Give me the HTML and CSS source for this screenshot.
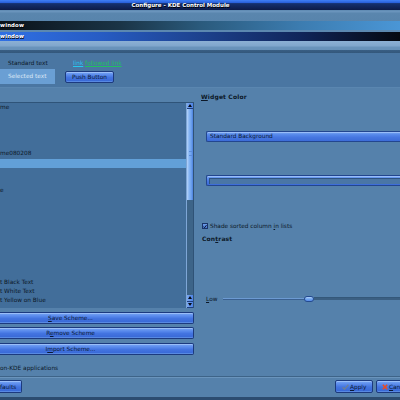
FILE: index.html
```html
<!DOCTYPE html>
<html>
<head>
<meta charset="utf-8">
<link rel="stylesheet" href="styles.css">
</head>
<body>
<div class="screen">
  <div class="titlebar">Configure - KDE Control Module</div>
  <div class="band1"></div>
  <div class="wt inactive">window</div>
  <div class="wgap"></div>
  <div class="wt active">window</div>
  <div class="band2"></div>
  <div class="darkline"></div>
  <div class="preview">
    <div class="std">Standard text</div>
    <div class="links"><span class="link">link</span> <span class="visited">followed link</span></div>
    <div class="seltext">Selected text</div>
    <div class="pushcell"><div class="btn push">Push Button</div></div>
  </div>
  <div class="main">
    <div class="left">
      <div class="list">
        <div class="items">
          <div class="row">me</div>
          <div class="row"></div>
          <div class="row"></div>
          <div class="row"></div>
          <div class="row"></div>
          <div class="row">me080208</div>
          <div class="row sel"></div>
          <div class="row"></div>
          <div class="row"></div>
          <div class="row">e</div>
          <div class="row"></div>
          <div class="row"></div>
          <div class="row"></div>
          <div class="row"></div>
          <div class="row"></div>
          <div class="row"></div>
          <div class="row"></div>
          <div class="row"></div>
          <div class="row"></div>
          <div class="row">t Black Text</div>
          <div class="row">t White Text</div>
          <div class="row">t Yellow on Blue</div>
        </div>
        <div class="scroll">
          <div class="sb-btn"><svg width="4" height="3" viewBox="0 0 4 3"><path d="M0 3 L2 0 L4 3 Z" fill="#050a14"/></svg></div>
          <div class="sb-thumb"><div class="grip"></div></div>
          <div class="sb-trough"></div>
          <div class="sb-btn"><svg width="4" height="3" viewBox="0 0 4 3"><path d="M0 3 L2 0 L4 3 Z" fill="#050a14"/></svg></div>
          <div class="sb-btn"><svg width="4" height="3" viewBox="0 0 4 3"><path d="M0 0 L4 0 L2 3 Z" fill="#050a14"/></svg></div>
        </div>
      </div>
      <div class="btn wide first"><span><u>S</u>ave Scheme...</span></div>
      <div class="btn wide second"><span>R<u>e</u>move Scheme</span></div>
      <div class="btn wide third"><span>I<u>m</u>port Scheme...</span></div>
    </div>
    <div class="right">
      <div class="heading"><u>W</u>idget Color</div>
      <div class="combo">Standard Background</div>
      <div class="combo colorbtn"><div class="swatch"></div></div>
      <div class="check">
        <span class="cb"><svg width="5" height="5" viewBox="0 0 5 5"><path d="M0.6 2.6 L1.9 4 L4.4 0.8" fill="none" stroke="#06101e" stroke-width="1.1"/></svg></span>
        <span>Shade sorted column <u>i</u>n lists</span>
      </div>
      <div class="heading contrast">Con<u>t</u>rast</div>
      <div class="slider">
        <span class="low"><u>L</u>ow</span>
        <div class="track">
          <div class="groove-left"></div>
          <div class="handle"></div>
          <div class="groove-right"></div>
        </div>
      </div>
    </div>
  </div>
  <div class="nonkde">on-KDE applications</div>
  <div class="sep"></div>
  <div class="footer">
    <div class="btn defaults">faults</div>
    <div class="btn apply">
      <svg width="7" height="6" viewBox="0 0 7 6"><path d="M0.6 3.2 L2.5 5.2 L6.4 0.8" fill="none" stroke="#6e7f94" stroke-width="1.3"/></svg>
      <span><u>A</u>pply</span>
    </div>
    <div class="btn cancel">
      <svg width="6" height="6" viewBox="0 0 6 6"><path d="M0.8 0.8 L5.2 5.2 M5.2 0.8 L0.8 5.2" stroke="#f04a1c" stroke-width="1.5"/></svg>
      <span><u>C</u>ancel</span>
    </div>
  </div>
  <div class="bottom"></div>
</div>
</body>
</html>
```

FILE: styles.css
```css
* { box-sizing: border-box; margin: 0; padding: 0; }
html, body { width: 400px; height: 400px; overflow: hidden; }
body {
  background: #5581ab;
  font-family: "DejaVu Sans", sans-serif;
  font-size: 5.8px;
  color: #0c1828;
}
.screen {
  width: 400px;
  height: 400px;
  overflow: hidden;
  display: flex;
  flex-direction: column;
}
.titlebar {
  flex: none;
  height: 10px;
  background: linear-gradient(#4080f6 0, #2a62dc 2.5px, #15306e 3.6px, #0d1b48 10px);
  color: #ffffff;
  font-weight: bold;
  font-size: 5.5px;
  line-height: 11px;
  text-align: center;
  padding-right: 39px;
  text-shadow: 0.6px 0.6px 0 #000;
  white-space: nowrap;
}
.band1 {
  flex: none;
  height: 11px;
  background: linear-gradient(#5a86ae 0, #6a94bc 1px, #6a94bc 2px, #5a86ae 3px, #5884ac 11px);
}
.wt {
  flex: none;
  height: 9px;
  color: #ffffff;
  font-weight: bold;
  font-size: 5.4px;
  line-height: 9px;
  letter-spacing: 0.15px;
  text-shadow: 0.5px 0.5px 0 #000;
  white-space: nowrap;
}
.inactive { background: linear-gradient(to right, #0a1118 0, #1a3446 30%, #2a5a7c 50%, #3c7cb0 75%, #4a96d6 100%); }
.active { background: linear-gradient(to right, #3070e4 0, #275cc4 25%, #1d428e 50%, #10255a 75%, #05080f 100%); }
.wgap { flex: none; height: 2px; background: #5c88b0; }
.band2 {
  flex: none;
  height: 9px;
  background: linear-gradient(#8cb0d4 0, #80a6cc 5px, #6a94bc 6px, #6690b8 9px);
}
.darkline { flex: none; height: 3px; background: linear-gradient(#3a5f84, #33577b); }
.preview {
  flex: none;
  height: 35px;
  background: #4a76a2;
  padding-top: 5px;
  display: grid;
  grid-template-columns: 55px 1fr;
  grid-template-rows: 10px 15px;
  row-gap: 1px;
  column-gap: 10px;
  border-bottom: 1px solid #5a86b0;
}
.std { padding-left: 8px; line-height: 10px; white-space: nowrap; }
.links { padding-left: 8px; line-height: 10px; white-space: nowrap; }
.link { color: #26c8f0; text-decoration: underline; }
.visited { color: #20c060; text-decoration: underline; }
.seltext {
  background: #6a9fd4;
  color: #dce8f6;
  padding-left: 8px;
  line-height: 15px;
  white-space: nowrap;
}
.pushcell { display: flex; align-items: center; }
.btn {
  display: flex;
  align-items: center;
  justify-content: center;
  height: 12px;
  border: 1px solid #1c3a7e;
  border-radius: 2px;
  background: linear-gradient(#78a6f4 0, #5586ea 35%, #4374e0 55%, #3767d4 100%);
  box-shadow: inset 0 1px 0 rgba(200, 225, 255, 0.45), inset 0 -1px 0 rgba(120, 170, 240, 0.5);
  color: #0a1834;
  white-space: nowrap;
  flex: none;
}
.push { width: 49px; }

.main {
  flex: none;
  height: 272px;
  display: flex;
  column-gap: 7px;
}
.left {
  flex: none;
  width: 194px;
  padding-top: 14px;
  display: flex;
  flex-direction: column;
}
.list {
  flex: none;
  height: 206px;
  display: flex;
  border-top: 1px solid #2f5479;
}
.items {
  flex: 1;
  background: #426e9a;
  padding-top: 0.4px;
}
.row {
  height: 9.2px;
  line-height: 9.2px;
  white-space: nowrap;
}
.row.sel { background: #62a0d8; }
.scroll {
  flex: none;
  width: 8px;
  display: flex;
  flex-direction: column;
  border-left: 1px solid #7ea6d6;
  border-right: 1px solid #2f5276;
  background: #3d6488;
}
.sb-btn {
  flex: none;
  height: 6.4px;
  display: flex;
  align-items: center;
  justify-content: center;
  background: linear-gradient(to right, #7aa8f0, #4c82e6);
  border-bottom: 0.5px solid #1f3f80;
}
.sb-thumb {
  flex: none;
  height: 91px;
  background: linear-gradient(to right, #b4d4fa 0, #86b6f4 35%, #6ea2ee 70%, #4a80dc 100%);
  display: flex;
  align-items: center;
  justify-content: center;
  padding-bottom: 2px;
}
.grip { width: 3px; height: 5px; border-top: 1px solid #5c8cd8; border-bottom: 1px solid #5c8cd8; }
.sb-trough { flex: 1; background: #3d6488; }

.wide {
  width: 194px;
  border-left: none;
  border-radius: 0 2px 2px 0;
  padding-right: 52px;
}
.first { margin-top: 4px; }
.second { margin-top: 3px; }
.third { margin-top: 4px; }

.right {
  flex: 1;
  display: flex;
  flex-direction: column;
  min-width: 0;
}
.heading {
  margin-top: 5px;
  height: 8px;
  line-height: 8px;
  font-weight: bold;
  font-size: 6px;
  letter-spacing: 0.15px;
  white-space: nowrap;
}
.combo {
  margin-top: 30px;
  margin-left: 5px;
  width: 220px;
  height: 11px;
  border: 1px solid #23468e;
  border-right: none;
  border-radius: 2px 0 0 2px;
  background: linear-gradient(#7aa8f2 0, #5688ea 30%, #4676e0 60%, #3c6cd8 100%);
  box-shadow: inset 0 1px 0 rgba(190, 215, 255, 0.5);
  padding-left: 3px;
  line-height: 9px;
  color: #0a1834;
  white-space: nowrap;
}
.colorbtn {
  margin-top: 33px;
  padding: 1.5px 0 2px 2px;
}
.swatch {
  height: 6px;
  background: #4a76a6;
  border-top: 1px solid #2e5380;
  border-left: 1px solid #2e5380;
}
.check {
  margin-top: 36px;
  margin-left: 1px;
  height: 8px;
  display: flex;
  align-items: center;
  column-gap: 2px;
  white-space: nowrap;
}
.cb {
  flex: none;
  width: 6px;
  height: 6px;
  border: 0.5px solid #1a3468;
  background: linear-gradient(#6e9ee8, #4272d2);
  display: flex;
  align-items: center;
  justify-content: center;
}
.contrast { margin-top: 5px; margin-left: 1px; }
.slider {
  margin-top: 51px;
  margin-left: 5px;
  height: 9px;
  display: flex;
  align-items: center;
  column-gap: 5px;
}
.low { flex: none; width: 12px; white-space: nowrap; }
.track {
  flex: 1;
  display: flex;
  align-items: center;
}
.groove-left {
  flex: none;
  width: 81px;
  height: 2px;
  background: #6c9ad2;
  border-bottom: 1px solid #3a6090;
}
.handle {
  flex: none;
  width: 10px;
  height: 6px;
  border-radius: 3px;
  border: 0.5px solid #244a90;
  background: linear-gradient(#b0d0f8 0, #7eb0f2 40%, #5288e6 100%);
}
.groove-right {
  flex: 1;
  height: 3px;
  background: #3b5f82;
  border-top: 1px solid #34587a;
}

.nonkde {
  flex: none;
  height: 16px;
  line-height: 16px;
  white-space: nowrap;
}
.sep {
  flex: none;
  height: 2px;
  background: linear-gradient(#3e6488 0, #3e6488 1px, #6a94bc 1px);
}
.footer {
  flex: none;
  height: 19px;
  padding-top: 2px;
  display: flex;
  align-items: flex-start;
}
.footer .btn { height: 13px; }
.defaults {
  width: 22px;
  border-left: none;
  border-radius: 0 2px 2px 0;
  justify-content: flex-start;
}
.apply {
  margin-left: auto;
  width: 38px;
  justify-content: flex-start;
  padding-left: 6px;
  column-gap: 1px;
}
.cancel {
  margin-left: 3px;
  margin-right: -24px;
  width: 48px;
  justify-content: flex-start;
  padding-left: 5px;
  column-gap: 1px;
}
.bottom {
  flex: none;
  height: 3px;
  background: #2c4c70;
}
```
